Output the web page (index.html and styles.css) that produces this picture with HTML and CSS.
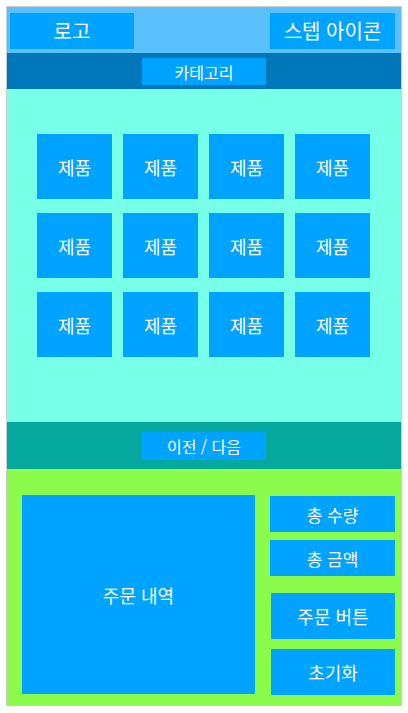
FILE: index.html
```html
<!DOCTYPE html>
<html lang="ko">
<head>
<meta charset="utf-8">
<title>Kiosk</title>
<link rel="stylesheet" href="styles.css">
</head>
<body>
<div class="app">
  <header class="header">
    <div class="box logo">로고</div>
    <div class="box step">스텝 아이콘</div>
  </header>
  <nav class="category">
    <div class="box cat-box">카테고리</div>
  </nav>
  <main class="products">
    <div class="grid">
      <div class="box tile">제품</div>
      <div class="box tile">제품</div>
      <div class="box tile">제품</div>
      <div class="box tile">제품</div>
      <div class="box tile">제품</div>
      <div class="box tile">제품</div>
      <div class="box tile">제품</div>
      <div class="box tile">제품</div>
      <div class="box tile">제품</div>
      <div class="box tile">제품</div>
      <div class="box tile">제품</div>
      <div class="box tile">제품</div>
    </div>
  </main>
  <div class="pager">
    <div class="box pager-box">이전 / 다음</div>
  </div>
  <footer class="order">
    <div class="box order-list">주문 내역</div>
    <div class="side">
      <div class="box info">총 수량</div>
      <div class="box info info-gap">총 금액</div>
      <div class="box action action-first">주문 버튼</div>
      <div class="box action action-second">초기화</div>
    </div>
  </footer>
</div>
</body>
</html>
```

FILE: styles.css
```css
* { box-sizing: border-box; }
html, body { margin: 0; padding: 0; background: #ffffff; }
body {
  padding: 6px;
  font-family: "Noto Sans CJK KR", "Noto Sans", sans-serif;
}
.app {
  width: 396px;
  height: 700px;
  border: 1px solid #cccccc;
  display: flex;
  flex-direction: column;
}
.box {
  background: #00a3ff;
  color: #ffffff;
  display: flex;
  align-items: center;
  justify-content: center;
  line-height: 1;
}
.header {
  height: 46px;
  background: #5ac0fe;
  display: flex;
  justify-content: space-between;
  padding: 6px 6px 4px 3px;
}
.logo { width: 124px; height: 36px; font-size: 20px; }
.step { width: 125px; height: 36px; font-size: 20px; }
.category {
  height: 36px;
  background: #0077b8;
  display: flex;
  justify-content: center;
  padding-top: 5px;
}
.cat-box { width: 124px; height: 27px; font-size: 16px; }
.products {
  height: 333px;
  background: #78ffe8;
  padding-top: 45px;
  display: flex;
  justify-content: center;
}
.grid {
  display: grid;
  grid-template-columns: repeat(4, 75px);
  grid-auto-rows: 65px;
  column-gap: 11px;
  row-gap: 14px;
  align-content: start;
  margin-left: -1px;
}
.tile { font-size: 18px; }
.pager {
  height: 47px;
  background: #04a89c;
  display: flex;
  justify-content: center;
  padding-top: 10px;
}
.pager-box { width: 124px; height: 28px; font-size: 16px; }
.order {
  flex: 1;
  background: #8cfc4c;
  display: flex;
  padding: 26px 0 0 15px;
}
.order-list {
  width: 233px;
  height: 199px;
  font-size: 18px;
}
.side {
  margin-left: 15px;
  padding-top: 1px;
  display: flex;
  flex-direction: column;
}
.info { width: 125px; height: 36px; font-size: 17px; }
.info-gap { margin-top: 8px; }
.action { width: 124px; height: 46px; margin-left: 1px; font-size: 18px; }
.action-first { margin-top: 17px; }
.action-second { margin-top: 10px; }
```
